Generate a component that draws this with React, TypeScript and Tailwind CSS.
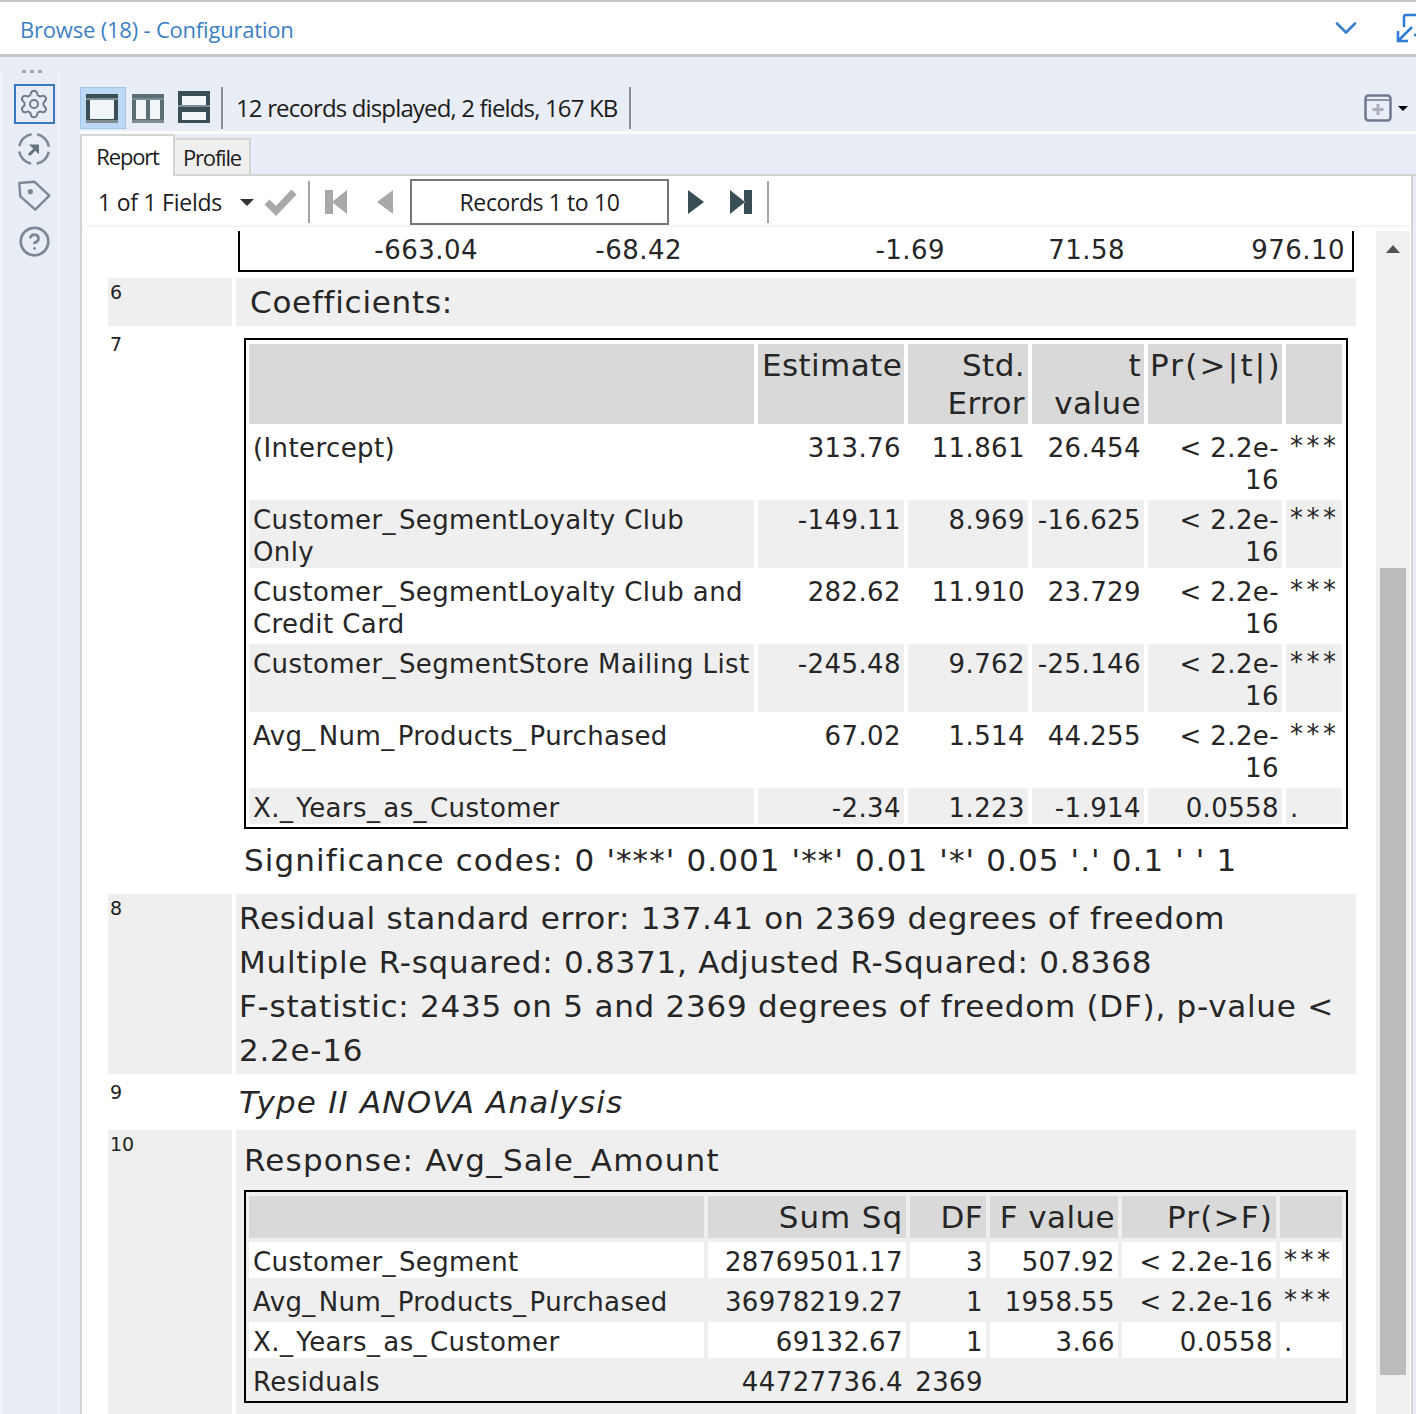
import type { ReactNode } from "react"
import { ChevronDown, CircleHelp, Settings } from "lucide-react"

const uiFont = "font-['Open_Sans',sans-serif]"
const cellFont = "font-['DejaVu_Sans',sans-serif]"
const bigText = `text-[31px] tracking-[0.75px] text-[#262626] ${cellFont}`

const coefficients = [
  ["(Intercept)", "313.76", "11.861", "26.454", "< 2.2e-16", "***"],
  ["Customer_SegmentLoyalty Club\nOnly", "-149.11", "8.969", "-16.625", "< 2.2e-16", "***"],
  ["Customer_SegmentLoyalty Club and\nCredit Card", "282.62", "11.910", "23.729", "< 2.2e-16", "***"],
  ["Customer_SegmentStore Mailing List", "-245.48", "9.762", "-25.146", "< 2.2e-16", "***"],
  ["Avg_Num_Products_Purchased", "67.02", "1.514", "44.255", "< 2.2e-16", "***"],
  ["X._Years_as_Customer", "-2.34", "1.223", "-1.914", "0.0558", "."],
]

const anova = [
  ["Customer_Segment", "28769501.17", "3", "507.92", "< 2.2e-16", "***"],
  ["Avg_Num_Products_Purchased", "36978219.27", "1", "1958.55", "< 2.2e-16", "***"],
  ["X._Years_as_Customer", "69132.67", "1", "3.66", "0.0558", "."],
  ["Residuals", "44727736.4", "2369", "", "", ""],
]

// the underscores are wider in the original font
function CellText({ text }: { text: string }) {
  if (text === "***") return <span className="inline-block -translate-y-[2px] tracking-[3.5px]">{text}</span>
  return (
    <>
      {text.split(/(_|\n)/).map((part, i) => {
        if (part === "_") return <span key={i} className="tracking-[3.4px]">_</span>
        if (part === "\n") return <br key={i} />
        return part
      })}
    </>
  )
}

function ResultTable({ head, rows, cols }: { head: ReactNode[]; rows: string[][]; cols: string }) {
  return (
    <div className={`grid ${cols} gap-[4px] border-2 border-black pt-[4px] pr-[3px] pb-[3px] pl-[3px] text-[#262626] ${cellFont}`}>
      {head.map((h, i) => (
        <div key={i} className="bg-[#d9d9d9] py-[2px] pr-[3px] pl-[4px] text-right text-[31px] leading-[38px] tracking-[0.4px]">
          {h}
        </div>
      ))}
      {rows.map((row, r) =>
        row.map((cell, c) => (
          <div
            key={`${r}-${c}`}
            className={`pt-[4px] pr-[3px] pl-[4px] text-[26px] leading-[32px] tracking-[0.4px] ${r % 2 ? "bg-[#efefef]" : "bg-white"} ${c === 0 || c === 5 ? "text-left" : "text-right"}`}
          >
            <CellText text={cell} />
          </div>
        )),
      )}
    </div>
  )
}

function RowLabel({ n }: { n: number }) {
  return <div className={`px-[2px] pt-[1px] text-[19px] leading-[26px] text-[#222] ${cellFont}`}>{n}</div>
}

function ViewIcon({ kind }: { kind: "single" | "columns" | "rows" }) {
  if (kind === "rows") {
    return (
      <svg className="-mt-[3px]" width="32" height="32" viewBox="0 0 32 32">
        <rect width="32" height="32" fill="#3a4f55" />
        <rect x="4" y="5" width="24" height="9" fill="#f2f5f8" />
        <rect x="4" y="21" width="24" height="8" fill="#f2f5f8" />
        <rect y="14" width="32" height="2" fill="#7d8f95" />
      </svg>
    )
  }
  return (
    <svg width="32" height="29" viewBox="0 0 32 29">
      <rect width="32" height="29" fill={kind === "single" ? "#3a4f55" : "#5a6e74"} />
      <rect y="4" width="32" height="2" fill="#7d8f95" />
      {kind === "single" ? (
        <rect x="4" y="6" width="24" height="19" fill="#f2f5f8" />
      ) : (
        <>
          <rect x="4" y="6" width="10" height="19" fill="#f2f5f8" />
          <rect x="18" y="6" width="10" height="19" fill="#f2f5f8" />
        </>
      )}
      <rect y="26" width="32" height="3" fill="#7f8d92" />
    </svg>
  )
}

export default function App() {
  return (
    <div className={`flex h-[1414px] w-[1416px] flex-col overflow-hidden bg-white ${uiFont}`}>
      <header className="flex h-[57px] shrink-0 items-center justify-between border-t-2 border-b-[3px] border-t-[#c8c8c8] border-b-[#c8c8c8] bg-white pt-[2px] pl-[20px]">
        <span className="text-[22px] tracking-[-0.2px] text-[#3d7fc4]">Browse (18) - Configuration</span>
        <div className="flex items-center gap-[32px]">
          <ChevronDown size={36} strokeWidth={1.8} color="#3f80d0" className="-mt-[3px]" />
          <svg className="-mr-[6px]" width="26" height="32" viewBox="0 0 26 32" fill="none" stroke="#2f7ad6" strokeWidth="2.5">
            <path d="M8 14V4a2 2 0 0 1 2-2h16M2 28L16 14M2 18v10h10M18 22h8" />
          </svg>
        </div>
      </header>

      <div className="flex min-h-0 flex-1 bg-[#e9edf6]">
        <aside className="w-[80px] shrink-0">
          <div className="h-full w-[60px] border-r-2 border-l-[3px] border-[#f1f3f9]">
            <div className="mt-[13px] ml-[19px] flex h-[4px] gap-[4px]">
              <div className="h-[3px] w-[4px] bg-[#a8a8a8]" />
              <div className="h-[3px] w-[4px] bg-[#a8a8a8]" />
              <div className="h-[3px] w-[4px] bg-[#a8a8a8]" />
            </div>
            <div className="mt-[10px] ml-[11px] flex w-[40px] flex-col items-center">
              <div className="flex h-[40px] w-[41px] shrink-0 items-center justify-center border-2 border-[#3a78c4]">
                <Settings size={32} strokeWidth={1.5} color="#6f7d89" />
              </div>
              <svg className="mt-[8px]" width="34" height="34" viewBox="0 0 34 34" fill="none" stroke="#7c8994" strokeWidth="2.5">
                <circle cx="17" cy="17" r="15" strokeDasharray="18 5.55" transform="rotate(10.5 17 17)" />
                <path d="M12 23l6-6" stroke="#66737e" strokeWidth="3" />
                <path d="M12 12.5h10v10z" fill="#66737e" stroke="none" />
              </svg>
              <svg className="mt-[13px]" width="34" height="34" viewBox="0 0 34 34" fill="none" stroke="#7c8994" strokeWidth="2.4" strokeLinejoin="round">
                <path d="M2.3 4L17.3 2.7L32.3 16.7L18.3 30.7L3.3 17.3Z" />
                <circle cx="13.3" cy="12.7" r="2.6" fill="#7c8994" stroke="none" />
              </svg>
              <CircleHelp className="mt-[12px]" size={33} strokeWidth={2} color="#7c8994" />
            </div>
          </div>
        </aside>

        <main className="flex min-w-0 flex-1 flex-col">
          <div className="flex h-[74px] shrink-0 items-center pt-[28px] pr-[8px]">
            <div className="flex h-[42px] w-[46px] items-center justify-center border border-[#a3c6ea] bg-[#bdd8f5] pr-[2px]">
              <ViewIcon kind="single" />
            </div>
            <div className="ml-[6px] flex items-center gap-[14px]">
              <ViewIcon kind="columns" />
              <ViewIcon kind="rows" />
            </div>
            <div className="ml-[11px] h-[42px] w-[2px] bg-[#8a8f94]" />
            <span className="ml-[13px] text-[24px] tracking-[-0.85px] text-[#1c1c1c]">12 records displayed, 2 fields, 167 KB</span>
            <div className="ml-[12px] h-[42px] w-[2px] bg-[#8a8f94]" />
            <div className="ml-auto flex items-center gap-[6px]">
              <svg width="28" height="28" viewBox="0 0 28 28" fill="none">
                <rect x="1.5" y="1.5" width="25" height="25" rx="3" stroke="#6f7a90" strokeWidth="2.5" />
                <path d="M2 6h24" stroke="#6f7a90" strokeWidth="1.5" />
                <path d="M14 10v11M8.5 15.5h11" stroke="#a8afbb" strokeWidth="3" />
              </svg>
              <div className="h-0 w-0 border-x-[5px] border-t-[5px] border-x-transparent border-t-black" />
            </div>
          </div>

          <div className="h-[3px] shrink-0 bg-white" />

          <div className="flex h-[42px] shrink-0 items-end">
            <div className="flex h-[42px] w-[95px] items-center justify-center border-x-2 border-t-2 border-[#d4d4d4] bg-white text-[22px] tracking-[-1.2px] text-[#1c1c1c]">Report</div>
            <div className="flex h-[38px] w-[76px] items-center justify-center border-t-2 border-r-2 border-b-2 border-[#d4d4d4] bg-[#efefef] text-[22px] tracking-[-1.2px] text-[#1c1c1c]">Profile</div>
            <div className="h-[2px] flex-1 bg-[#d4d4d4]" />
          </div>

          <div className="mr-[3px] flex min-h-0 flex-1 flex-col border-x-2 border-[#d4d4d4] bg-white">
            <div className="mr-[5px] ml-[5px] flex h-[51px] shrink-0 items-center border-b-2 border-[#f2f6fb] pt-[3px] text-[23px] tracking-[-0.25px] text-[#1c1c1c]">
              <span className="ml-[11px]">1 of 1 Fields</span>
              <div className="ml-[18px] h-0 w-0 border-x-[7px] border-t-[7px] border-x-transparent border-t-[#333]" />
              <svg className="ml-[10px]" width="34" height="28" viewBox="0 0 34 28" fill="none">
                <path d="M3 14l9 9L30 4" stroke="#a9a9a9" strokeWidth="7" />
              </svg>
              <div className="ml-[10px] h-[42px] w-[2px] bg-[#a0a4a8]" />
              <svg className="ml-[15px]" width="22" height="24" viewBox="0 0 22 24" fill="#a9a9a9">
                <path d="M0 0h8v24H0zM22 0v24L7 12z" />
              </svg>
              <svg className="ml-[30px]" width="16" height="24" viewBox="0 0 16 24" fill="#a9a9a9">
                <path d="M16 0v24L0 12z" />
              </svg>
              <div className="ml-[17px] flex h-[46px] w-[259px] items-center justify-center border-2 border-[#767676] tracking-[-0.4px]">Records 1 to 10</div>
              <svg className="ml-[18px]" width="18" height="24" viewBox="0 0 18 24" fill="#3a4f55">
                <path d="M1 0v24l16-12z" />
              </svg>
              <svg className="ml-[25px]" width="22" height="24" viewBox="0 0 22 24" fill="#3a4f55">
                <path d="M0 0v24l15-12zM14 0h8v24h-8z" />
              </svg>
              <div className="ml-[15px] h-[42px] w-[2px] bg-[#a0a4a8]" />
            </div>

            <div className="flex min-h-0 flex-1 overflow-hidden pt-[4px] pl-[26px]">
              <div className="flex w-[1248px] shrink-0 flex-col gap-[4px]">
                <div className={`ml-[130px] grid h-[41px] w-[1116px] shrink-0 grid-cols-[238px_204px_263px_180px_220px] border-x-2 border-b-2 border-black pt-[2px] text-right text-[26px] leading-[34px] tracking-[0.47px] text-[#262626] ${cellFont}`}>
                  <span>-663.04</span>
                  <span>-68.42</span>
                  <span>-1.69</span>
                  <span>71.58</span>
                  <span>976.10</span>
                </div>

                <section className="mt-[2px] flex shrink-0 gap-[4px]">
                  <div className="w-[124px] shrink-0 bg-[#efefef]"><RowLabel n={6} /></div>
                  <div className={`h-[48px] min-w-0 flex-1 bg-[#efefef] px-[14px] leading-[48px] ${bigText} tracking-[-0.2px]`}>Coefficients:</div>
                </section>

                <section className="flex shrink-0 gap-[4px]">
                  <div className="w-[124px] shrink-0"><RowLabel n={7} /></div>
                  <div className="min-w-0 flex-1 px-[8px] pt-[8px]">
                    <ResultTable
                      head={["", "Estimate", "Std. Error", "t value", <span className="-ml-[2px] tracking-[2.2px]">Pr(&gt;|t|)</span>, ""]}
                      rows={coefficients}
                      cols="grid-cols-[505px_146px_120px_112px_134px_56px]"
                    />
                    <p className={`mt-[8px] h-[53px] leading-[46px] ${bigText} tracking-[1.1px]`}>Significance codes: 0 '***' 0.001 '**' 0.01 '*' 0.05 '.' 0.1 ' ' 1</p>
                  </div>
                </section>

                <section className="flex shrink-0 gap-[4px]">
                  <div className="w-[124px] shrink-0 bg-[#efefef]"><RowLabel n={8} /></div>
                  <div className={`min-w-0 flex-1 bg-[#efefef] px-[3px] py-[2px] leading-[44px] ${bigText}`}>
                    Residual standard error: 137.41 on 2369 degrees of freedom
                    <br />
                    Multiple R-squared: 0.8371, Adjusted R-Squared: 0.8368
                    <br />
                    F-statistic: 2435 on 5 and 2369 degrees of freedom (DF), p-value &lt; 2.2e-16
                  </div>
                </section>

                <section className="flex shrink-0 gap-[4px]">
                  <div className="w-[124px] shrink-0"><RowLabel n={9} /></div>
                  <div className={`min-w-0 flex-1 px-[3px] leading-[48px] italic ${bigText} tracking-[1.2px]`}>Type II ANOVA Analysis</div>
                </section>

                <section className="flex shrink-0 gap-[4px]">
                  <div className="w-[124px] shrink-0 bg-[#efefef]"><RowLabel n={10} /></div>
                  <div className="min-w-0 flex-1 bg-[#efefef] px-[8px] pb-[20px]">
                    <p className={`h-[60px] leading-[60px] ${bigText} tracking-[1.2px]`}>Response: Avg_Sale_Amount</p>
                    <ResultTable
                      head={["", <span className="tracking-[0.9px]">Sum Sq</span>, "DF", "F value", <span className="tracking-[1.2px]">Pr(&gt;F)</span>, ""]}
                      rows={anova}
                      cols="grid-cols-[455px_198px_76px_128px_154px_62px]"
                    />
                  </div>
                </section>
              </div>

              <div className="relative ml-[20px] h-full w-[34px] shrink-0 bg-[#f0f0f0]">
                <div className="mx-auto mt-[14px] h-0 w-0 border-x-[7px] border-b-[8px] border-x-transparent border-b-[#505050]" />
                <div className="absolute top-[337px] right-[4px] left-[4px] h-[807px] bg-[#bcbcbc]" />
              </div>
            </div>
          </div>
        </main>
      </div>
    </div>
  )
}
